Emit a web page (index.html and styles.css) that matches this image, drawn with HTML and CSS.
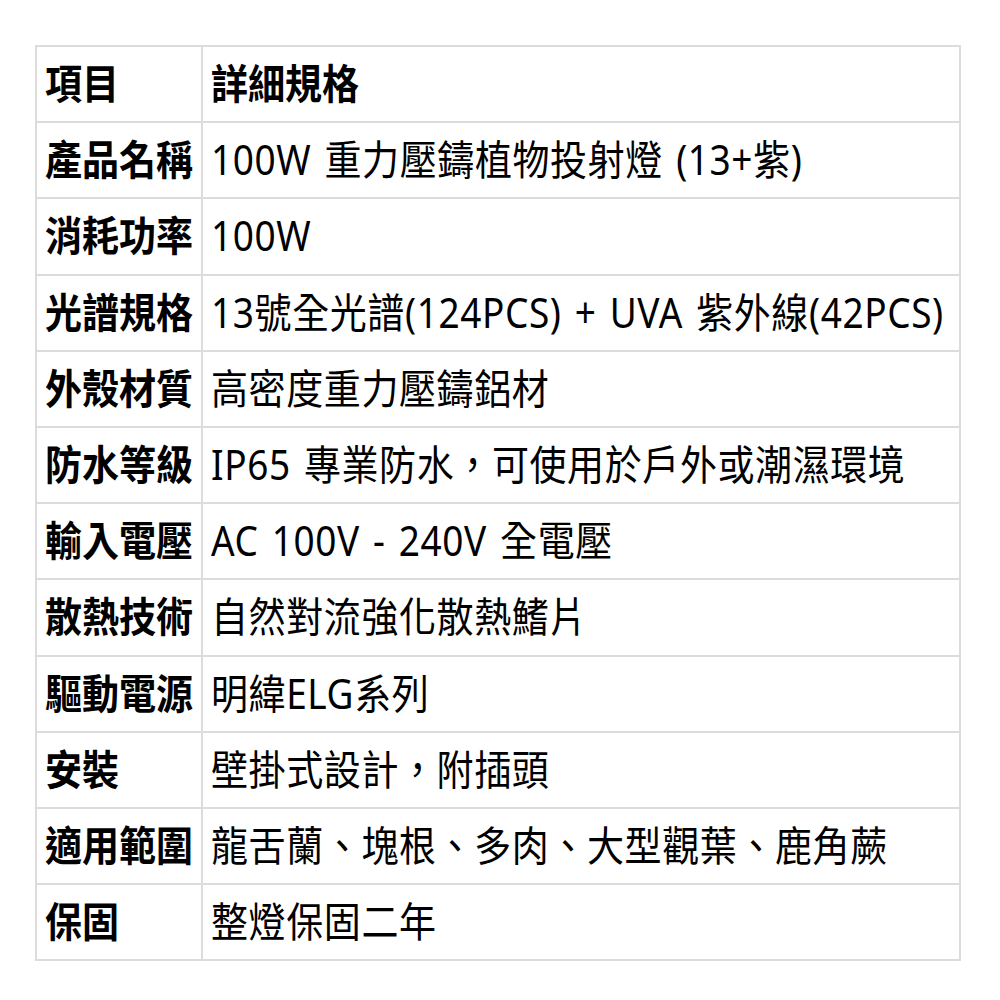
FILE: index.html
```html
<!DOCTYPE html>
<html lang="zh-Hant">
<head>
<meta charset="utf-8">
<link rel="stylesheet" href="styles.css">
</head>
<body>
<table class="spec">
  <colgroup><col class="c1"><col class="c2"></colgroup>
  <tr class="head"><th><span class="t">項目</span></th><th><span class="t">詳細規格</span></th></tr>
  <tr><th><span class="t">產品名稱</span></th><td><span class="t">100W 重力壓鑄植物投射燈 (13+紫)</span></td></tr>
  <tr><th><span class="t">消耗功率</span></th><td><span class="t">100W</span></td></tr>
  <tr><th><span class="t">光譜規格</span></th><td><span class="t">13號全光譜(124PCS) + UVA 紫外線(42PCS)</span></td></tr>
  <tr><th><span class="t">外殼材質</span></th><td><span class="t">高密度重力壓鑄鋁材</span></td></tr>
  <tr><th><span class="t">防水等級</span></th><td><span class="t">IP65 專業防水，可使用於戶外或潮濕環境</span></td></tr>
  <tr><th><span class="t">輸入電壓</span></th><td><span class="t">AC 100V - 240V 全電壓</span></td></tr>
  <tr><th><span class="t">散熱技術</span></th><td><span class="t">自然對流強化散熱鰭片</span></td></tr>
  <tr><th><span class="t">驅動電源</span></th><td><span class="t">明緯ELG系列</span></td></tr>
  <tr><th><span class="t">安裝</span></th><td><span class="t">壁掛式設計，附插頭</span></td></tr>
  <tr><th><span class="t">適用範圍</span></th><td><span class="t">龍舌蘭、塊根、多肉、大型觀葉、鹿角蕨</span></td></tr>
  <tr><th><span class="t">保固</span></th><td><span class="t">整燈保固二年</span></td></tr>
</table>
</body>
</html>
```
FILE: styles.css
```css
html, body {
  margin: 0;
  padding: 0;
  background: #fff;
}
body {
  padding: 45px 0 0 35px;
  font-family: "Noto Sans", "Noto Sans CJK TC", sans-serif;
  color: #000;
}
.spec {
  border-collapse: collapse;
  table-layout: fixed;
  width: 926px;
}
.c1 { width: 166px; }
.spec th, .spec td {
  border: 2px solid #dcdcdc;
  height: 74.2px;
  padding: 0 0 0 8px;
  font-size: 37px;
  line-height: 42px;
  text-align: left;
  vertical-align: middle;
  white-space: nowrap;
  overflow: visible;
}
.spec th {
  font-weight: 700;
}
.spec td,
.spec .head th + th {
  padding-left: 8px;
}
.spec td {
  font-weight: 400;
  word-spacing: 3px;
  letter-spacing: 0.6px;
}
.t {
  display: inline-block;
  transform: scaleY(1.12);
  transform-origin: 50% 55%;
}
```
